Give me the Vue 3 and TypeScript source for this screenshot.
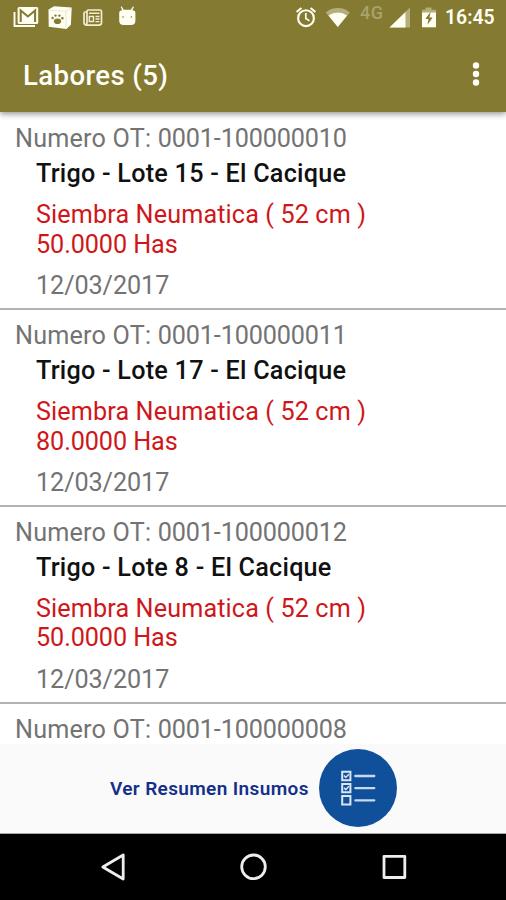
<script setup lang="ts">
interface Labor {
  ot: string
  lote: string
  tarea: string
  has: string
  fecha: string
}

const labores: Labor[] = [
  { ot: '0001-100000010', lote: 'Trigo - Lote 15 - El Cacique', tarea: 'Siembra Neumatica ( 52 cm )', has: '50.0000 Has', fecha: '12/03/2017' },
  { ot: '0001-100000011', lote: 'Trigo - Lote 17 - El Cacique', tarea: 'Siembra Neumatica ( 52 cm )', has: '80.0000 Has', fecha: '12/03/2017' },
  { ot: '0001-100000012', lote: 'Trigo - Lote 8 - El Cacique', tarea: 'Siembra Neumatica ( 52 cm )', has: '50.0000 Has', fecha: '12/03/2017' },
  { ot: '0001-100000008', lote: '', tarea: '', has: '', fecha: '' },
]
</script>

<template>
  <div class="screen">
    <header class="top">
      <div class="status">
        <svg class="notifications" width="140" height="36" viewBox="0 0 140 36">
          <!-- mail -->
          <path d="M14.5 12v14H35" fill="none" stroke="#fffef2" stroke-width="1.9" />
          <rect x="17.6" y="7" width="20.6" height="17" rx="1.6" fill="#fffef2" />
          <path d="M20.7 22V10.5l7.2 6 7.2-6V22" fill="none" stroke="#847a31" stroke-width="2.1" />
          <!-- paw box -->
          <path d="M48.5 9.5 54 6.3l17.7 1.2-.8 17.2-4.4 4.2-17.8-2.2z" fill="#fffef2" />
          <path d="M49.5 10.4 66 11.3l4.8-3M66 11.3v16.5" fill="none" stroke="#e6e2c8" stroke-width=".8" />
          <ellipse cx="57.5" cy="21.3" rx="3.6" ry="2.8" fill="#847a31" />
          <circle cx="52.6" cy="18" r="1.2" fill="#847a31" />
          <circle cx="55.5" cy="15.6" r="1.2" fill="#847a31" />
          <circle cx="59.4" cy="15.6" r="1.2" fill="#847a31" />
          <circle cx="62.4" cy="18.2" r="1.2" fill="#847a31" />
          <!-- newspaper -->
          <path d="M87 12h-1.6q-1.4 0-1.4 1.5v9q0 2.6 2.6 2.6h12.6q2.3 0 2.3-2.3V11.6q0-1.6-1.6-1.6H88.5Q87 10 87 11.6V22q0 2.8-1.6 2.8" fill="none" stroke="#f2edcf" stroke-width="1.7" />
          <path d="M89 13.2h10.5M89.3 16.5h4.2v5h-4.2zM95.5 16.5h4M95.5 19h4M95.5 21.6h4" fill="none" stroke="#f2edcf" stroke-width="1.4" />
          <!-- robot -->
          <path d="M119.2 13q0-2.8 3-2.8L120.7 7l.9-.7 2.2 3.5h7L133 6.3l.9.7-1.5 3.2q3 0 3 2.8v7.5q0 4.5-4.5 4.5h-7.2q-4.5 0-4.5-4.5z" fill="#fffef2" />
          <circle cx="123" cy="17" r=".8" fill="#847a31" />
          <circle cx="131.4" cy="17" r=".8" fill="#847a31" />
        </svg>
        <div class="system">
          <svg width="60" height="36" viewBox="0 0 60 36">
            <!-- alarm -->
            <g fill="none" stroke="#fffef2">
              <circle cx="11" cy="18.2" r="7.9" stroke-width="2.1" />
              <path d="M10.8 13.1v5.4l3.7 2.4" stroke-width="1.7" />
              <path d="m1.6 12 4.8-4M20.4 12l-4.8-4" stroke-width="2.1" />
            </g>
            <!-- wifi -->
            <path d="M30.8 12.4Q36 8 42.8 8t12 4.4L42.8 27z" fill="#b4ad7c" />
            <path d="M33.5 15.6Q37.7 12.4 42.8 12.4t9.3 3.2L42.8 27z" fill="#fffef2" />
          </svg>
          <span class="network">4G</span>
          <svg width="55" height="36" viewBox="0 0 55 36">
            <!-- signal -->
            <path d="M4.5 27.5 25 7.5v20z" fill="#b4ad7c" />
            <path d="M4.5 27.5 20.5 12v15.5z" fill="#fffef2" />
            <!-- battery -->
            <path d="M37 13v-3.2h3.5V7.5h6v2.3H51V13z" fill="#b4ad7c" />
            <path d="M37 12.5h14v14.8H37z" fill="#fffef2" />
            <path d="m45.6 11.8-5.3 7.3h3.2l-1 5.7 5.2-7.4h-3.2z" fill="#847a31" />
          </svg>
          <span class="clock">16:45</span>
        </div>
      </div>
      <div class="appbar">
        <h1 class="title">Labores (5)</h1>
        <svg class="more" width="8" height="26" viewBox="0 0 8 26" fill="#fffef8">
          <circle cx="4" cy="4.5" r="3.2" /><circle cx="4" cy="13" r="3.2" /><circle cx="4" cy="21.5" r="3.2" />
        </svg>
      </div>
    </header>

    <main class="list">
      <article v-for="labor in labores" :key="labor.ot" class="item">
        <div class="ot">Numero OT: <span class="ot-number">{{ labor.ot }}</span></div>
        <div class="lote">{{ labor.lote }}</div>
        <div class="tarea">{{ labor.tarea }}</div>
        <div class="has">{{ labor.has }}</div>
        <div class="fecha">{{ labor.fecha }}</div>
      </article>
    </main>

    <footer class="summary">
      <span class="summary-label">Ver Resumen Insumos</span>
      <button class="fab" aria-label="Ver Resumen Insumos">
        <svg width="78" height="78" viewBox="0 0 78 78" fill="none" stroke="#dce5f5">
          <path d="M23.2 22.8h8.2v8.4h-8.2zM23.2 34.9h8.2v8.4h-8.2zM23.2 47.1h8.2v8.4h-8.2z" stroke-width="2" />
          <path d="m25 26.6 1.8 1.9 3-3.3M25 38.7l1.8 1.9 3-3.3" stroke-width="1.5" />
          <path d="M36.3 27h19M36.3 39.1h19M36.3 51.3h19" stroke="#c9d9ef" stroke-width="2.3" stroke-linecap="round" />
        </svg>
      </button>
    </footer>

    <nav class="navbar">
      <svg width="506" height="66" viewBox="0 0 506 66" fill="none" stroke="#eee" stroke-width="2.8" stroke-linejoin="round">
        <path d="M102.8 33 123.2 21v24z" />
        <circle cx="253.5" cy="32.8" r="11.8" />
        <path d="M384 22.3h20.8v21.2H384z" />
      </svg>
    </nav>
  </div>
</template>

<style>
body {
  margin: 0;
}
</style>

<style scoped>
.screen {
  display: flex;
  flex-direction: column;
  width: 506px;
  height: 900px;
  overflow: hidden;
  background: #fff;
  font-family: Roboto, "Liberation Sans", sans-serif;
}
.top {
  flex: none;
  height: 112px;
  background: #847a31;
  box-shadow: 0 2px 6px rgba(0, 0, 0, 0.42);
  z-index: 1;
}
.status {
  display: flex;
  justify-content: space-between;
  height: 36px;
}
.system {
  display: flex;
  width: 211px;
}
.system svg {
  flex: none;
}
.network {
  flex: none;
  width: 30px;
  padding: 3px 0 0 5px;
  box-sizing: border-box;
  color: #aaa26c;
  font-size: 18px;
  line-height: 20px;
  font-weight: 500;
  letter-spacing: 0.4px;
}
.clock {
  margin-left: 5px;
  color: #fffef2;
  font-size: 19.4px;
  font-weight: 600;
  line-height: 36px;
}
.appbar {
  display: flex;
  align-items: center;
  justify-content: space-between;
  height: 76px;
  padding: 0 26px 0 23px;
}
.title {
  margin: 3px 0 0;
  color: #fffef8;
  font-size: 27.6px;
  font-weight: 500;
  line-height: 32px;
  letter-spacing: 0.38px;
}
.more {
  margin-bottom: 1px;
}
.list {
  flex: none;
  height: 632px;
  overflow: hidden;
}
.item {
  box-sizing: border-box;
  height: 196.8px;
  padding: 11px 0 0 36px;
  border-bottom: 2px solid #b2b2b2;
  color: #737373;
  font-size: 25.2px;
  line-height: 30px;
  white-space: nowrap;
}
.item:first-child {
  height: 198px;
  padding-top: 12px;
}
.ot {
  height: 30px;
  margin-left: -21px;
  letter-spacing: 0.2px;
}
.ot-number {
  letter-spacing: -0.14px;
}
.lote {
  height: 30px;
  margin-top: 5px;
  color: #111;
  font-weight: 500;
  letter-spacing: 0.24px;
}
.tarea,
.has {
  height: 29.5px;
  color: #cf1719;
  line-height: 29.5px;
}
.tarea {
  margin-top: 11px;
  letter-spacing: 0.12px;
}
.has,
.fecha {
  letter-spacing: -0.08px;
}
.fecha {
  margin-top: 12px;
}
.summary {
  display: flex;
  flex: none;
  align-items: center;
  box-sizing: border-box;
  height: 90px;
  padding: 0 0 2px 110px;
  border-bottom: 1px solid #aaa;
  background: #fafafa;
}
.summary-label {
  width: 209px;
  padding-top: 2px;
  color: #14308a;
  font-size: 19px;
  font-weight: 600;
  letter-spacing: 0.36px;
  white-space: nowrap;
}
.fab {
  width: 78px;
  height: 78px;
  padding: 0;
  border: 0;
  border-radius: 50%;
  background: #10509a;
}
.fab svg {
  display: block;
}
.navbar {
  flex: none;
  height: 66px;
  background: #000;
}
.navbar svg {
  display: block;
}
</style>
